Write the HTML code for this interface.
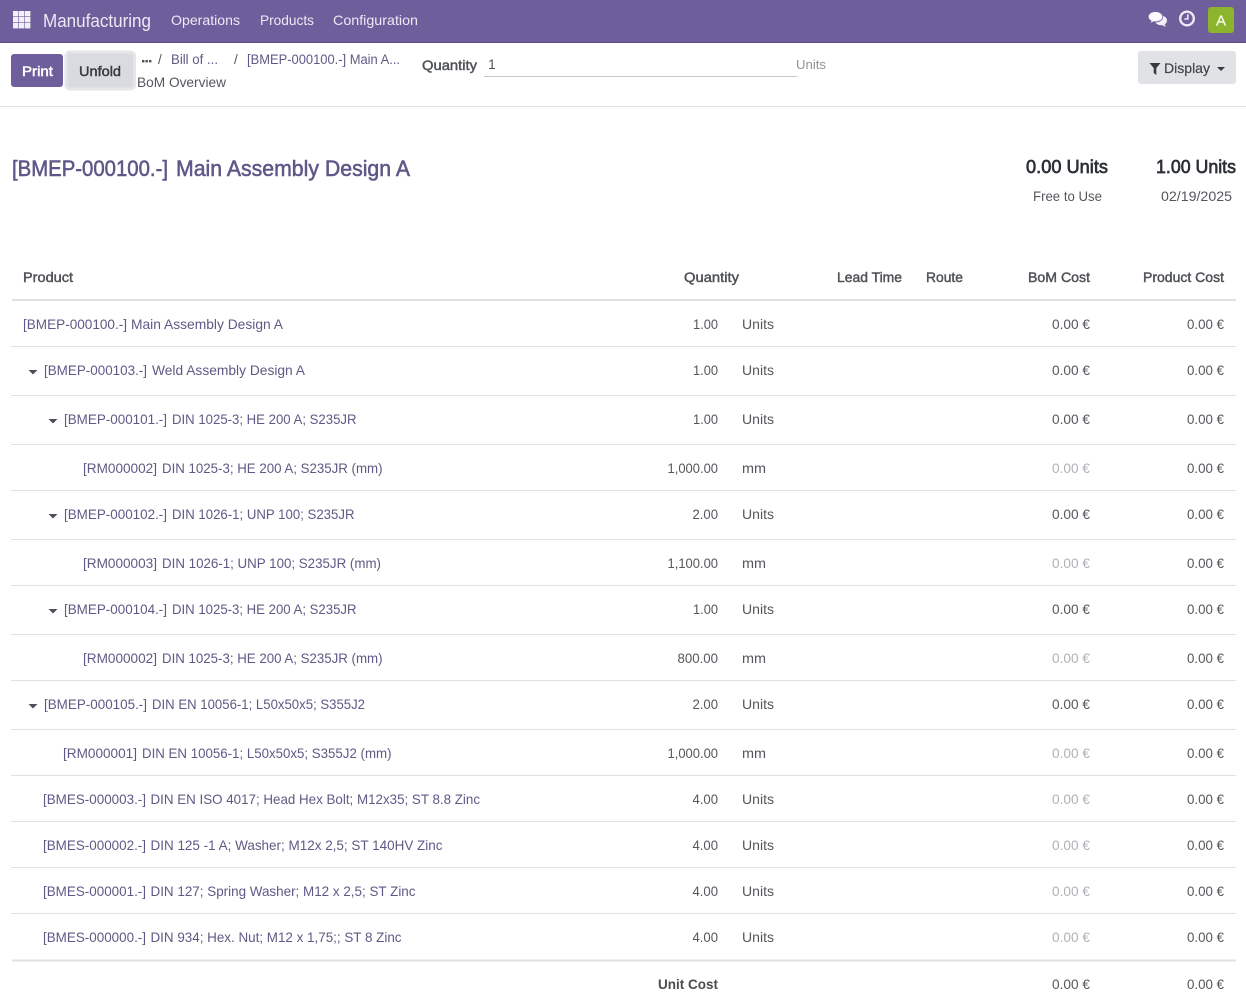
<!DOCTYPE html>
<html lang="en"><head><meta charset="utf-8"><title>BoM Overview</title>
<style>
html,body{margin:0;padding:0;background:#fff;width:1246px;height:1008px;overflow:hidden}
svg{display:block;font-family:"Liberation Sans",sans-serif;font-size:14px}
.l{fill:#5f5a85}.q{fill:#55575c}.m{fill:#afb2b6}.h{fill:#4f5257;stroke:#4f5257;stroke-width:.45}
.r{fill:#dfe2e5}
</style></head><body>
<svg width="1246" height="1008" viewBox="0 0 1246 1008">
<rect width="1246" height="42" fill="#6f5e9c"/><rect y="42" width="1246" height="1" fill="#5d4f86"/>
<g fill="#f3f1f8"><rect x="13" y="11" width="5.400" height="5.400"/><rect x="19" y="11" width="5.400" height="5.400"/><rect x="25" y="11" width="5.400" height="5.400"/><rect x="13" y="17" width="5.400" height="5.400"/><rect x="19" y="17" width="5.400" height="5.400"/><rect x="25" y="17" width="5.400" height="5.400"/><rect x="13" y="23" width="5.400" height="5.400"/><rect x="19" y="23" width="5.400" height="5.400"/><rect x="25" y="23" width="5.400" height="5.400"/></g>
<g fill="#ece9f4">
<text x="43" y="27" font-size="18" textLength="108" lengthAdjust="spacingAndGlyphs">Manufacturing</text>
<text x="171" y="25" font-size="14" textLength="69" lengthAdjust="spacingAndGlyphs">Operations</text>
<text x="260" y="25" font-size="14" textLength="54" lengthAdjust="spacingAndGlyphs">Products</text>
<text x="333" y="25" font-size="14" textLength="85" lengthAdjust="spacingAndGlyphs">Configuration</text>
</g>
<path d="M1160.5 15.5c3.8 0 6.5 2.2 6.5 5 0 1.6-.9 3-2.3 3.9l1 2.6-3.6-1.9c-3 .3-5.5-.8-6.7-2.6 3.2-.1 6.5-2.400 5.100-7z" fill="#f3f1f8"/>
<path d="M1155.500 11.500c4 0 7.300 2.300 7.300 5.200s-3.300 5.200-7.300 5.200c-.7 0-1.300-.1-1.900-.2l-3.500 2 1-2.900c-1.800-1-2.900-2.400-2.900-4.100 0-2.900 3.300-5.200 7.300-5.200z" fill="#fbfafd" stroke="#6f5e9c" stroke-width=".8"/>
<circle cx="1187" cy="18.500" r="6.800" fill="none" stroke="#ece9f4" stroke-width="2.400"/>
<path d="M1187.800 14.300v4.700h-3.500" fill="none" stroke="#ece9f4" stroke-width="1.600"/>
<rect x="1208" y="7" width="26" height="26" rx="3" fill="#8db42d"/>
<text x="1216" y="25.500" font-size="15" fill="#f7fbe9" stroke="#f7fbe9" stroke-width=".25" textLength="10" lengthAdjust="spacingAndGlyphs">A</text>

<rect x="11" y="54" width="52" height="33" rx="3" fill="#6f5e9c"/>
<text x="22" y="76" fill="#fff" stroke="#fff" stroke-width=".5" textLength="31" lengthAdjust="spacingAndGlyphs">Print</text>
<rect x="66" y="52" width="68.500" height="37" rx="4" fill="#d9dbe0" stroke="#e4e6e9" stroke-width="3"/>
<text x="79" y="76" fill="#343a40" stroke="#343a40" stroke-width=".45" textLength="42" lengthAdjust="spacingAndGlyphs">Unfold</text>
<g fill="#495057"><rect x="142" y="60" width="2.400" height="2.400"/><rect x="145.500" y="60" width="2.400" height="2.400"/><rect x="149" y="60" width="2.400" height="2.400"/></g>
<text x="158" y="64" class="q" font-size="13.500">/</text>
<text x="171" y="64" class="l" font-size="13.500" textLength="47" lengthAdjust="spacingAndGlyphs">Bill of ...</text>
<text x="234" y="64" class="q" font-size="13.500">/</text>
<text x="247" y="64" class="l" font-size="13.500" textLength="153" lengthAdjust="spacingAndGlyphs">[BMEP-000100.-] Main A...</text>
<text x="137" y="87" class="q" textLength="89" lengthAdjust="spacingAndGlyphs">BoM Overview</text>
<text x="422" y="70" class="h" textLength="55" lengthAdjust="spacingAndGlyphs">Quantity</text>
<text x="488" y="69" class="q">1</text>
<rect x="484" y="76" width="313" height="1" fill="#c6c7c9"/>
<text x="796" y="69" fill="#8f9297" font-size="13" textLength="30" lengthAdjust="spacingAndGlyphs">Units</text>
<rect x="1138" y="51" width="98" height="33" rx="3" fill="#e0e2e5"/>
<path d="M1149.500 63h11l-4.200 5v7l-2.600-2v-5z" fill="#343a40"/>
<text x="1164" y="73" fill="#3f454b" stroke="#3f454b" stroke-width=".2" textLength="46" lengthAdjust="spacingAndGlyphs">Display</text>
<path d="M1217 67h8l-4 4z" fill="#343a40"/>
<rect y="106" width="1246" height="1" fill="#dfe2e5"/>

<g font-size="22" fill="#5f5788" stroke="#5f5788" stroke-width=".55">
<text x="12" y="176" textLength="156" lengthAdjust="spacingAndGlyphs">[BMEP-000100.-]</text>
<text x="176" y="176" textLength="234" lengthAdjust="spacingAndGlyphs">Main Assembly Design A</text>
</g>
<text x="1026" y="173" font-size="18" fill="#2b2f36" stroke="#2b2f36" stroke-width=".65" textLength="82" lengthAdjust="spacingAndGlyphs">0.00 Units</text>
<text x="1156" y="173" font-size="18" fill="#2b2f36" stroke="#2b2f36" stroke-width=".65" textLength="80" lengthAdjust="spacingAndGlyphs">1.00 Units</text>
<text x="1033" y="201" class="q" textLength="69" lengthAdjust="spacingAndGlyphs">Free to Use</text>
<text x="1161" y="201" class="q" textLength="71" lengthAdjust="spacingAndGlyphs">02/19/2025</text>

<text x="23" y="282" class="h" textLength="50" lengthAdjust="spacingAndGlyphs">Product</text>
<text x="684" y="282" class="h" textLength="55" lengthAdjust="spacingAndGlyphs">Quantity</text>
<text x="837" y="282" class="h" textLength="65" lengthAdjust="spacingAndGlyphs">Lead Time</text>
<text x="926" y="282" class="h" textLength="37" lengthAdjust="spacingAndGlyphs">Route</text>
<text x="1028" y="282" class="h" textLength="62" lengthAdjust="spacingAndGlyphs">BoM Cost</text>
<text x="1143" y="282" class="h" textLength="81" lengthAdjust="spacingAndGlyphs">Product Cost</text>

<rect x="12" y="299" width="1224" height="2" class="r"/>
<rect x="11" y="346" width="1225" height="1" class="r"/><rect x="11" y="395" width="1225" height="1" class="r"/><rect x="11" y="444" width="1225" height="1" class="r"/><rect x="11" y="490" width="1225" height="1" class="r"/><rect x="11" y="539" width="1225" height="1" class="r"/><rect x="11" y="585" width="1225" height="1" class="r"/><rect x="11" y="634" width="1225" height="1" class="r"/><rect x="11" y="680" width="1225" height="1" class="r"/><rect x="11" y="729" width="1225" height="1" class="r"/><rect x="11" y="775" width="1225" height="1" class="r"/><rect x="11" y="821" width="1225" height="1" class="r"/><rect x="11" y="867" width="1225" height="1" class="r"/><rect x="11" y="913" width="1225" height="1" class="r"/>
<rect x="12" y="959.500" width="1224" height="2" class="r"/>

<g fill="#495057"><path d="M28.500 370h9l-4.500 4.500z"/><path d="M48.500 419h9l-4.500 4.500z"/><path d="M48.500 514h9l-4.500 4.500z"/><path d="M48.500 609h9l-4.500 4.500z"/><path d="M28.500 704h9l-4.500 4.500z"/></g>

<g class="l">
<text x="23" y="329" textLength="104" lengthAdjust="spacingAndGlyphs">[BMEP-000100.-]</text><text x="131" y="329" textLength="152" lengthAdjust="spacingAndGlyphs">Main Assembly Design A</text>
<text x="44" y="375" textLength="103" lengthAdjust="spacingAndGlyphs">[BMEP-000103.-]</text><text x="152" y="375" textLength="153" lengthAdjust="spacingAndGlyphs">Weld Assembly Design A</text>
<text x="64" y="424" textLength="103" lengthAdjust="spacingAndGlyphs">[BMEP-000101.-]</text><text x="172" y="424" textLength="184.500" lengthAdjust="spacingAndGlyphs">DIN 1025-3; HE 200 A; S235JR</text>
<text x="83" y="473" textLength="74" lengthAdjust="spacingAndGlyphs">[RM000002]</text><text x="162" y="473" textLength="220.500" lengthAdjust="spacingAndGlyphs">DIN 1025-3; HE 200 A; S235JR (mm)</text>
<text x="64" y="519" textLength="103" lengthAdjust="spacingAndGlyphs">[BMEP-000102.-]</text><text x="172" y="519" textLength="182.500" lengthAdjust="spacingAndGlyphs">DIN 1026-1; UNP 100; S235JR</text>
<text x="83" y="568" textLength="74" lengthAdjust="spacingAndGlyphs">[RM000003]</text><text x="162" y="568" textLength="219" lengthAdjust="spacingAndGlyphs">DIN 1026-1; UNP 100; S235JR (mm)</text>
<text x="64" y="614" textLength="103" lengthAdjust="spacingAndGlyphs">[BMEP-000104.-]</text><text x="172" y="614" textLength="184.500" lengthAdjust="spacingAndGlyphs">DIN 1025-3; HE 200 A; S235JR</text>
<text x="83" y="663" textLength="74" lengthAdjust="spacingAndGlyphs">[RM000002]</text><text x="162" y="663" textLength="220.500" lengthAdjust="spacingAndGlyphs">DIN 1025-3; HE 200 A; S235JR (mm)</text>
<text x="44" y="709" textLength="103" lengthAdjust="spacingAndGlyphs">[BMEP-000105.-]</text><text x="152" y="709" textLength="213" lengthAdjust="spacingAndGlyphs">DIN EN 10056-1; L50x50x5; S355J2</text>
<text x="63" y="758" textLength="74" lengthAdjust="spacingAndGlyphs">[RM000001]</text><text x="142" y="758" textLength="249.500" lengthAdjust="spacingAndGlyphs">DIN EN 10056-1; L50x50x5; S355J2 (mm)</text>
<text x="43" y="804" textLength="103" lengthAdjust="spacingAndGlyphs">[BMES-000003.-]</text><text x="150.500" y="804" textLength="329.500" lengthAdjust="spacingAndGlyphs">DIN EN ISO 4017; Head Hex Bolt; M12x35; ST 8.8 Zinc</text>
<text x="43" y="850" textLength="103" lengthAdjust="spacingAndGlyphs">[BMES-000002.-]</text><text x="150.500" y="850" textLength="292" lengthAdjust="spacingAndGlyphs">DIN 125 -1 A; Washer; M12x 2,5; ST 140HV Zinc</text>
<text x="43" y="896" textLength="103" lengthAdjust="spacingAndGlyphs">[BMES-000001.-]</text><text x="150.500" y="896" textLength="265" lengthAdjust="spacingAndGlyphs">DIN 127; Spring Washer; M12 x 2,5; ST Zinc</text>
<text x="43" y="942" textLength="103" lengthAdjust="spacingAndGlyphs">[BMES-000000.-]</text><text x="150.500" y="942" textLength="251" lengthAdjust="spacingAndGlyphs">DIN 934; Hex. Nut; M12 x 1,75;; ST 8 Zinc</text>
</g>

<g class="q">
<text x="693" y="329" textLength="25" lengthAdjust="spacingAndGlyphs">1.00</text><text x="742" y="329" textLength="32" lengthAdjust="spacingAndGlyphs">Units</text><text x="1052" y="329" textLength="38" lengthAdjust="spacingAndGlyphs">0.00 €</text><text x="1187" y="329" textLength="37" lengthAdjust="spacingAndGlyphs">0.00 €</text>
<text x="693" y="375" textLength="25" lengthAdjust="spacingAndGlyphs">1.00</text><text x="742" y="375" textLength="32" lengthAdjust="spacingAndGlyphs">Units</text><text x="1052" y="375" textLength="38" lengthAdjust="spacingAndGlyphs">0.00 €</text><text x="1187" y="375" textLength="37" lengthAdjust="spacingAndGlyphs">0.00 €</text>
<text x="693" y="424" textLength="25" lengthAdjust="spacingAndGlyphs">1.00</text><text x="742" y="424" textLength="32" lengthAdjust="spacingAndGlyphs">Units</text><text x="1052" y="424" textLength="38" lengthAdjust="spacingAndGlyphs">0.00 €</text><text x="1187" y="424" textLength="37" lengthAdjust="spacingAndGlyphs">0.00 €</text>
<text x="667.500" y="473" textLength="50.500" lengthAdjust="spacingAndGlyphs">1,000.00</text><text x="742" y="473" textLength="24" lengthAdjust="spacingAndGlyphs">mm</text><text x="1052" y="473" class="m" textLength="38" lengthAdjust="spacingAndGlyphs">0.00 €</text><text x="1187" y="473" textLength="37" lengthAdjust="spacingAndGlyphs">0.00 €</text>
<text x="692.500" y="519" textLength="25.500" lengthAdjust="spacingAndGlyphs">2.00</text><text x="742" y="519" textLength="32" lengthAdjust="spacingAndGlyphs">Units</text><text x="1052" y="519" textLength="38" lengthAdjust="spacingAndGlyphs">0.00 €</text><text x="1187" y="519" textLength="37" lengthAdjust="spacingAndGlyphs">0.00 €</text>
<text x="667.500" y="568" textLength="50.500" lengthAdjust="spacingAndGlyphs">1,100.00</text><text x="742" y="568" textLength="24" lengthAdjust="spacingAndGlyphs">mm</text><text x="1052" y="568" class="m" textLength="38" lengthAdjust="spacingAndGlyphs">0.00 €</text><text x="1187" y="568" textLength="37" lengthAdjust="spacingAndGlyphs">0.00 €</text>
<text x="693" y="614" textLength="25" lengthAdjust="spacingAndGlyphs">1.00</text><text x="742" y="614" textLength="32" lengthAdjust="spacingAndGlyphs">Units</text><text x="1052" y="614" textLength="38" lengthAdjust="spacingAndGlyphs">0.00 €</text><text x="1187" y="614" textLength="37" lengthAdjust="spacingAndGlyphs">0.00 €</text>
<text x="677.500" y="663" textLength="40.500" lengthAdjust="spacingAndGlyphs">800.00</text><text x="742" y="663" textLength="24" lengthAdjust="spacingAndGlyphs">mm</text><text x="1052" y="663" class="m" textLength="38" lengthAdjust="spacingAndGlyphs">0.00 €</text><text x="1187" y="663" textLength="37" lengthAdjust="spacingAndGlyphs">0.00 €</text>
<text x="692.500" y="709" textLength="25.500" lengthAdjust="spacingAndGlyphs">2.00</text><text x="742" y="709" textLength="32" lengthAdjust="spacingAndGlyphs">Units</text><text x="1052" y="709" textLength="38" lengthAdjust="spacingAndGlyphs">0.00 €</text><text x="1187" y="709" textLength="37" lengthAdjust="spacingAndGlyphs">0.00 €</text>
<text x="667.500" y="758" textLength="50.500" lengthAdjust="spacingAndGlyphs">1,000.00</text><text x="742" y="758" textLength="24" lengthAdjust="spacingAndGlyphs">mm</text><text x="1052" y="758" class="m" textLength="38" lengthAdjust="spacingAndGlyphs">0.00 €</text><text x="1187" y="758" textLength="37" lengthAdjust="spacingAndGlyphs">0.00 €</text>
<text x="692.500" y="804" textLength="25.500" lengthAdjust="spacingAndGlyphs">4.00</text><text x="742" y="804" textLength="32" lengthAdjust="spacingAndGlyphs">Units</text><text x="1052" y="804" class="m" textLength="38" lengthAdjust="spacingAndGlyphs">0.00 €</text><text x="1187" y="804" textLength="37" lengthAdjust="spacingAndGlyphs">0.00 €</text>
<text x="692.500" y="850" textLength="25.500" lengthAdjust="spacingAndGlyphs">4.00</text><text x="742" y="850" textLength="32" lengthAdjust="spacingAndGlyphs">Units</text><text x="1052" y="850" class="m" textLength="38" lengthAdjust="spacingAndGlyphs">0.00 €</text><text x="1187" y="850" textLength="37" lengthAdjust="spacingAndGlyphs">0.00 €</text>
<text x="692.500" y="896" textLength="25.500" lengthAdjust="spacingAndGlyphs">4.00</text><text x="742" y="896" textLength="32" lengthAdjust="spacingAndGlyphs">Units</text><text x="1052" y="896" class="m" textLength="38" lengthAdjust="spacingAndGlyphs">0.00 €</text><text x="1187" y="896" textLength="37" lengthAdjust="spacingAndGlyphs">0.00 €</text>
<text x="692.500" y="942" textLength="25.500" lengthAdjust="spacingAndGlyphs">4.00</text><text x="742" y="942" textLength="32" lengthAdjust="spacingAndGlyphs">Units</text><text x="1052" y="942" class="m" textLength="38" lengthAdjust="spacingAndGlyphs">0.00 €</text><text x="1187" y="942" textLength="37" lengthAdjust="spacingAndGlyphs">0.00 €</text>
<text x="1052" y="989" textLength="38" lengthAdjust="spacingAndGlyphs">0.00 €</text><text x="1187" y="989" textLength="37" lengthAdjust="spacingAndGlyphs">0.00 €</text>
</g>
<text x="658" y="989" font-weight="bold" fill="#4a4c50" textLength="60" lengthAdjust="spacingAndGlyphs">Unit Cost</text>
</svg>
</body></html>
